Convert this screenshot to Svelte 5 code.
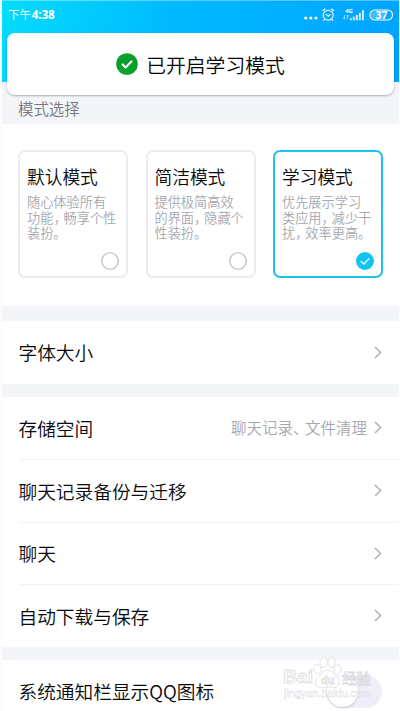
<script lang="ts">
interface Mode {
	id: string;
	title: string;
	lines: string[];
}

const modes: Mode[] = [
	{ id: "default", title: "默认模式", lines: ["随心体验所有", "功能，畅享个性", "装扮。"] },
	{ id: "simple", title: "简洁模式", lines: ["提供极简高效", "的界面，隐藏个", "性装扮。"] },
	{ id: "study", title: "学习模式", lines: ["优先展示学习", "类应用，减少干", "扰，效率更高。"] },
];

const groups = [
	[{ label: "字体大小", detail: "" }],
	[
		{ label: "存储空间", detail: "聊天记录、文件清理" },
		{ label: "聊天记录备份与迁移", detail: "" },
		{ label: "聊天", detail: "" },
		{ label: "自动下载与保存", detail: "" },
	],
];

let selected = $state("study");
let notify = $state(false);

// split so that the comma marks can be set narrower than a full em
const pieces = (text: string) => text.split(/([，、])/);
</script>

{#snippet tight(text: string)}
	{#each pieces(text) as piece}<span class:punct={piece === "，" || piece === "、"}>{piece}</span>{/each}
{/snippet}

<div class="screen">
	<header class="header">
		<div class="status">
			<span class="time">下午<b>4:38</b></span>
			<svg class="status-icons" width="92" height="18" viewBox="0 0 92 18" fill="none" stroke="#fff">
				<g fill="#fff" stroke="none">
					<circle cx="3.7" cy="12" r="1.6" />
					<circle cx="8.8" cy="12" r="1.6" />
					<circle cx="13.9" cy="12" r="1.6" />
				</g>
				<circle cx="26.2" cy="9.2" r="5" stroke-width="1.1" />
				<path d="M20.6 4.8l2.6-2M31.8 4.8l-2.6-2M22.8 13.2l-1.3 1.6M29.6 13.2l1.3 1.6M23.8 8.2l2.4 2 2.4-2" stroke-width="1.1" />
				<text x="43.2" y="6.6" class="net">4G</text>
				<path d="M42.4 9v4.2M41.2 11.8l1.2 1.4M45.2 13.2V9l1.2 1.4" stroke-width=".8" opacity=".8" />
				<path d="M48.8 12.2v2M51.8 10.8v3.4M54.8 9v5.2M57.8 7v7.2M60.9 4.2v10" stroke-width="1.9" opacity=".85" />
				<rect x="68" y="4" width="22.5" height="10" rx="5" stroke-width="1.1" />
				<path d="M73 5.2h9v7.6h-9a3.8 3.8 0 0 1 0-7.6z" fill="#fff" stroke="none" opacity=".25" />
				<text x="79.5" y="12.8" class="level">37</text>
			</svg>
		</div>
	</header>

	<div class="toast" role="status">
		<svg width="22" height="22" viewBox="0 0 22 22">
			<circle cx="11" cy="11" r="10.8" fill="#0ba02c" />
			<path d="M6.6 11.4l3 3 5.8-6" fill="none" stroke="#fff" stroke-width="2.1" stroke-linecap="round" stroke-linejoin="round" />
		</svg>
		<span>已开启学习模式</span>
	</div>

	<h2 class="section-title">模式选择</h2>

	<section class="modes">
		{#each modes as mode (mode.id)}
			<button class="mode" class:active={selected === mode.id} onclick={() => (selected = mode.id)}>
				<span class="mode-title">{mode.title}</span>
				<span class="mode-desc">
					{#each mode.lines as line}
						<span class="line">{@render tight(line)}</span>
					{/each}
				</span>
				<svg class="radio" width="18" height="18" viewBox="0 0 18 18" fill="none">
					{#if selected === mode.id}
						<circle cx="9" cy="9" r="9" fill="#12c4f3" />
						<path d="M4.8 9.1l3 2.9 5.6-5.6" stroke="#fff" stroke-width="1.3" />
					{:else}
						<circle cx="9" cy="9" r="8.3" stroke="#b5b6bd" stroke-width="1.1" />
					{/if}
				</svg>
			</button>
		{/each}
	</section>

	{#each groups as group}
		<ul class="group">
			{#each group as item}
				<li class="row">
					<span class="label">{item.label}</span>
					{#if item.detail}
						<span class="detail">{@render tight(item.detail)}</span>
					{/if}
					<svg class="chevron" width="8" height="13" viewBox="0 0 8 13" fill="none">
						<path d="M1 1l5.6 5.5L1 12" stroke="#b0b1b7" stroke-width="1.5" />
					</svg>
				</li>
			{/each}
		</ul>
	{/each}

	<div class="group">
		<div class="row">
			<span class="label">系统通知栏显示QQ图标</span>
			<button class="switch" class:on={notify} aria-label="系统通知栏显示QQ图标" onclick={() => (notify = !notify)}></button>
		</div>
	</div>

	<svg class="watermark" width="110" height="50" viewBox="0 0 110 50">
		<g fill="#fff" stroke="#d6d6dc" stroke-width=".8">
			<text x="0" y="28" class="wm-name" textLength="30" lengthAdjust="spacingAndGlyphs">Bai</text>
			<ellipse cx="34.5" cy="14" rx="3.6" ry="4.8" transform="rotate(-15 34.5 14)" />
			<ellipse cx="40.5" cy="7.5" rx="3.6" ry="5" />
			<ellipse cx="48.5" cy="7.5" rx="3.6" ry="5" />
			<ellipse cx="54.5" cy="14.5" rx="3.6" ry="4.8" transform="rotate(15 54.5 14.5)" />
			<path d="M44.5 15c-4.5 0-6 4.5-9.5 7-4 3.5-3 10.5 2.500 10.500 2.500 0 5-.8 7-.8s4.500.8 7 .8c5.500 0 6.500-7 2.500-10.500-3.500-2.500-5-7-9.500-7z" />
			<text x="38" y="28.5" class="wm-du">du</text>
			<text x="59" y="29" class="wm-cn">经验</text>
			<text x="1" y="42" class="wm-url" textLength="87" lengthAdjust="spacingAndGlyphs">jingyan.baidu.com</text>
		</g>
	</svg>
</div>

<style>
	:global(body) {
		margin: 0;
		background: #fff;
	}
	.screen {
		position: relative;
		box-sizing: border-box;
		width: 400px;
		height: 711px;
		padding: 0 1px 0 2px;
		overflow: hidden;
		background: linear-gradient(#f5fcff 82px, #fdfdfe 82px);
		color: #08090d;
		font-family: "Noto Sans CJK SC DemiLight", "Noto Sans CJK SC", sans-serif;
		font-weight: 350;
	}
	.header {
		height: 82px;
		background: linear-gradient(100deg, #05dcfb 0%, #00baff 42%, #00a3ff 100%);
	}
	.status {
		display: flex;
		justify-content: space-between;
		align-items: center;
		height: 28px;
		padding: 0 5px 0 6px;
		border-top: 1px solid rgba(255, 255, 255, 0.35);
		box-sizing: border-box;
	}
	.time {
		margin-top: -1px;
		color: #fff;
		font-size: 11.4px;
		font-weight: 400;
		line-height: 16px;
	}
	.time b {
		margin-left: 1px;
		font-family: "Open Sans", sans-serif;
		font-size: 11.8px;
		font-weight: 700;
		letter-spacing: -0.2px;
	}
	.net {
		font: 700 6px "Open Sans", sans-serif;
		fill: #fff;
		stroke: none;
	}
	.level {
		font: 700 10.5px "Open Sans", sans-serif;
		fill: #fff;
		stroke: none;
		text-anchor: middle;
	}
	.toast {
		position: absolute;
		top: 33px;
		left: 7px;
		display: flex;
		align-items: center;
		justify-content: center;
		gap: 8px;
		width: 387px;
		height: 62px;
		border-radius: 8px;
		background: #fff;
		box-shadow: 0 1px 2px rgba(40, 50, 60, 0.35);
		color: #050506;
		font-size: 19.8px;
	}
	.section-title {
		height: 42px;
		box-sizing: border-box;
		margin: 0;
		padding: 15px 16px 0;
		background: #f3f5f8;
		color: #77787e;
		font-size: 15.4px;
		font-weight: inherit;
		line-height: 22px;
	}
	.modes {
		display: flex;
		gap: 17.5px;
		height: 182px;
		box-sizing: border-box;
		padding: 26px 16px 0;
		background: #fff;
	}
	.mode {
		position: relative;
		display: flex;
		flex-direction: column;
		flex: none;
		box-sizing: border-box;
		width: 110px;
		height: 128px;
		padding: 12px 0 0 7px;
		border: 2px solid #ececf1;
		border-radius: 7px;
		background: #fff;
		font-family: inherit;
		font-weight: inherit;
		text-align: left;
	}
	.mode.active {
		border-color: #1ec4e6;
	}
	.mode-title {
		color: #08090d;
		font-size: 17.7px;
		line-height: 24px;
	}
	.mode-desc {
		margin-top: 7px;
		color: #a6a7ae;
		font-family: "Liberation Sans", "Noto Sans CJK SC DemiLight", "Noto Sans CJK SC", sans-serif;
		font-size: 13.2px;
		line-height: 15.6px;
		white-space: nowrap;
	}
	.line {
		display: block;
	}
	.punct {
		letter-spacing: -0.23em;
	}
	.radio {
		position: absolute;
		right: 7px;
		bottom: 6px;
	}
	.group {
		margin: 0;
		padding: 0;
		border-top: 13.5px solid #f3f5f8;
		background: #fff;
		list-style: none;
	}
	.modes + .group {
		border-top-width: 15px;
	}
	.row {
		display: flex;
		align-items: center;
		box-sizing: border-box;
		height: 62.5px;
		margin-left: 16.5px;
		padding-right: 17px;
	}
	.row + .row {
		border-top: 1px solid #f3f3f6;
	}
	.label {
		flex: 1;
		font-size: 18.7px;
		line-height: 28px;
	}
	.detail {
		margin: -2px 7px 0 0;
		color: #a6a7ae;
		font-size: 15.5px;
	}
	.switch {
		display: flex;
		width: 56px;
		height: 33px;
		margin-top: 2px;
		padding: 1px;
		border: 0;
		border-radius: 17px;
		background: #eeeff8;
	}
	.switch::before {
		content: "";
		width: 31px;
		height: 31px;
		border-radius: 50%;
		background: #fff;
		box-shadow: 0 1px 2px rgba(60, 60, 80, 0.25);
	}
	.switch.on {
		justify-content: flex-end;
		background: #12c4f3;
	}
	.watermark {
		position: absolute;
		left: 283px;
		top: 655px;
		opacity: 0.8;
		pointer-events: none;
	}
	.wm-name {
		font: 700 18.5px "Liberation Sans", sans-serif;
	}
	.wm-du {
		font: 700 11px "Liberation Sans", sans-serif;
	}
	.wm-cn {
		font: 400 14.5px "Noto Sans CJK SC", sans-serif;
	}
	.wm-url {
		font: 10px "Liberation Sans", sans-serif;
		stroke-width: 0.4;
	}
</style>
